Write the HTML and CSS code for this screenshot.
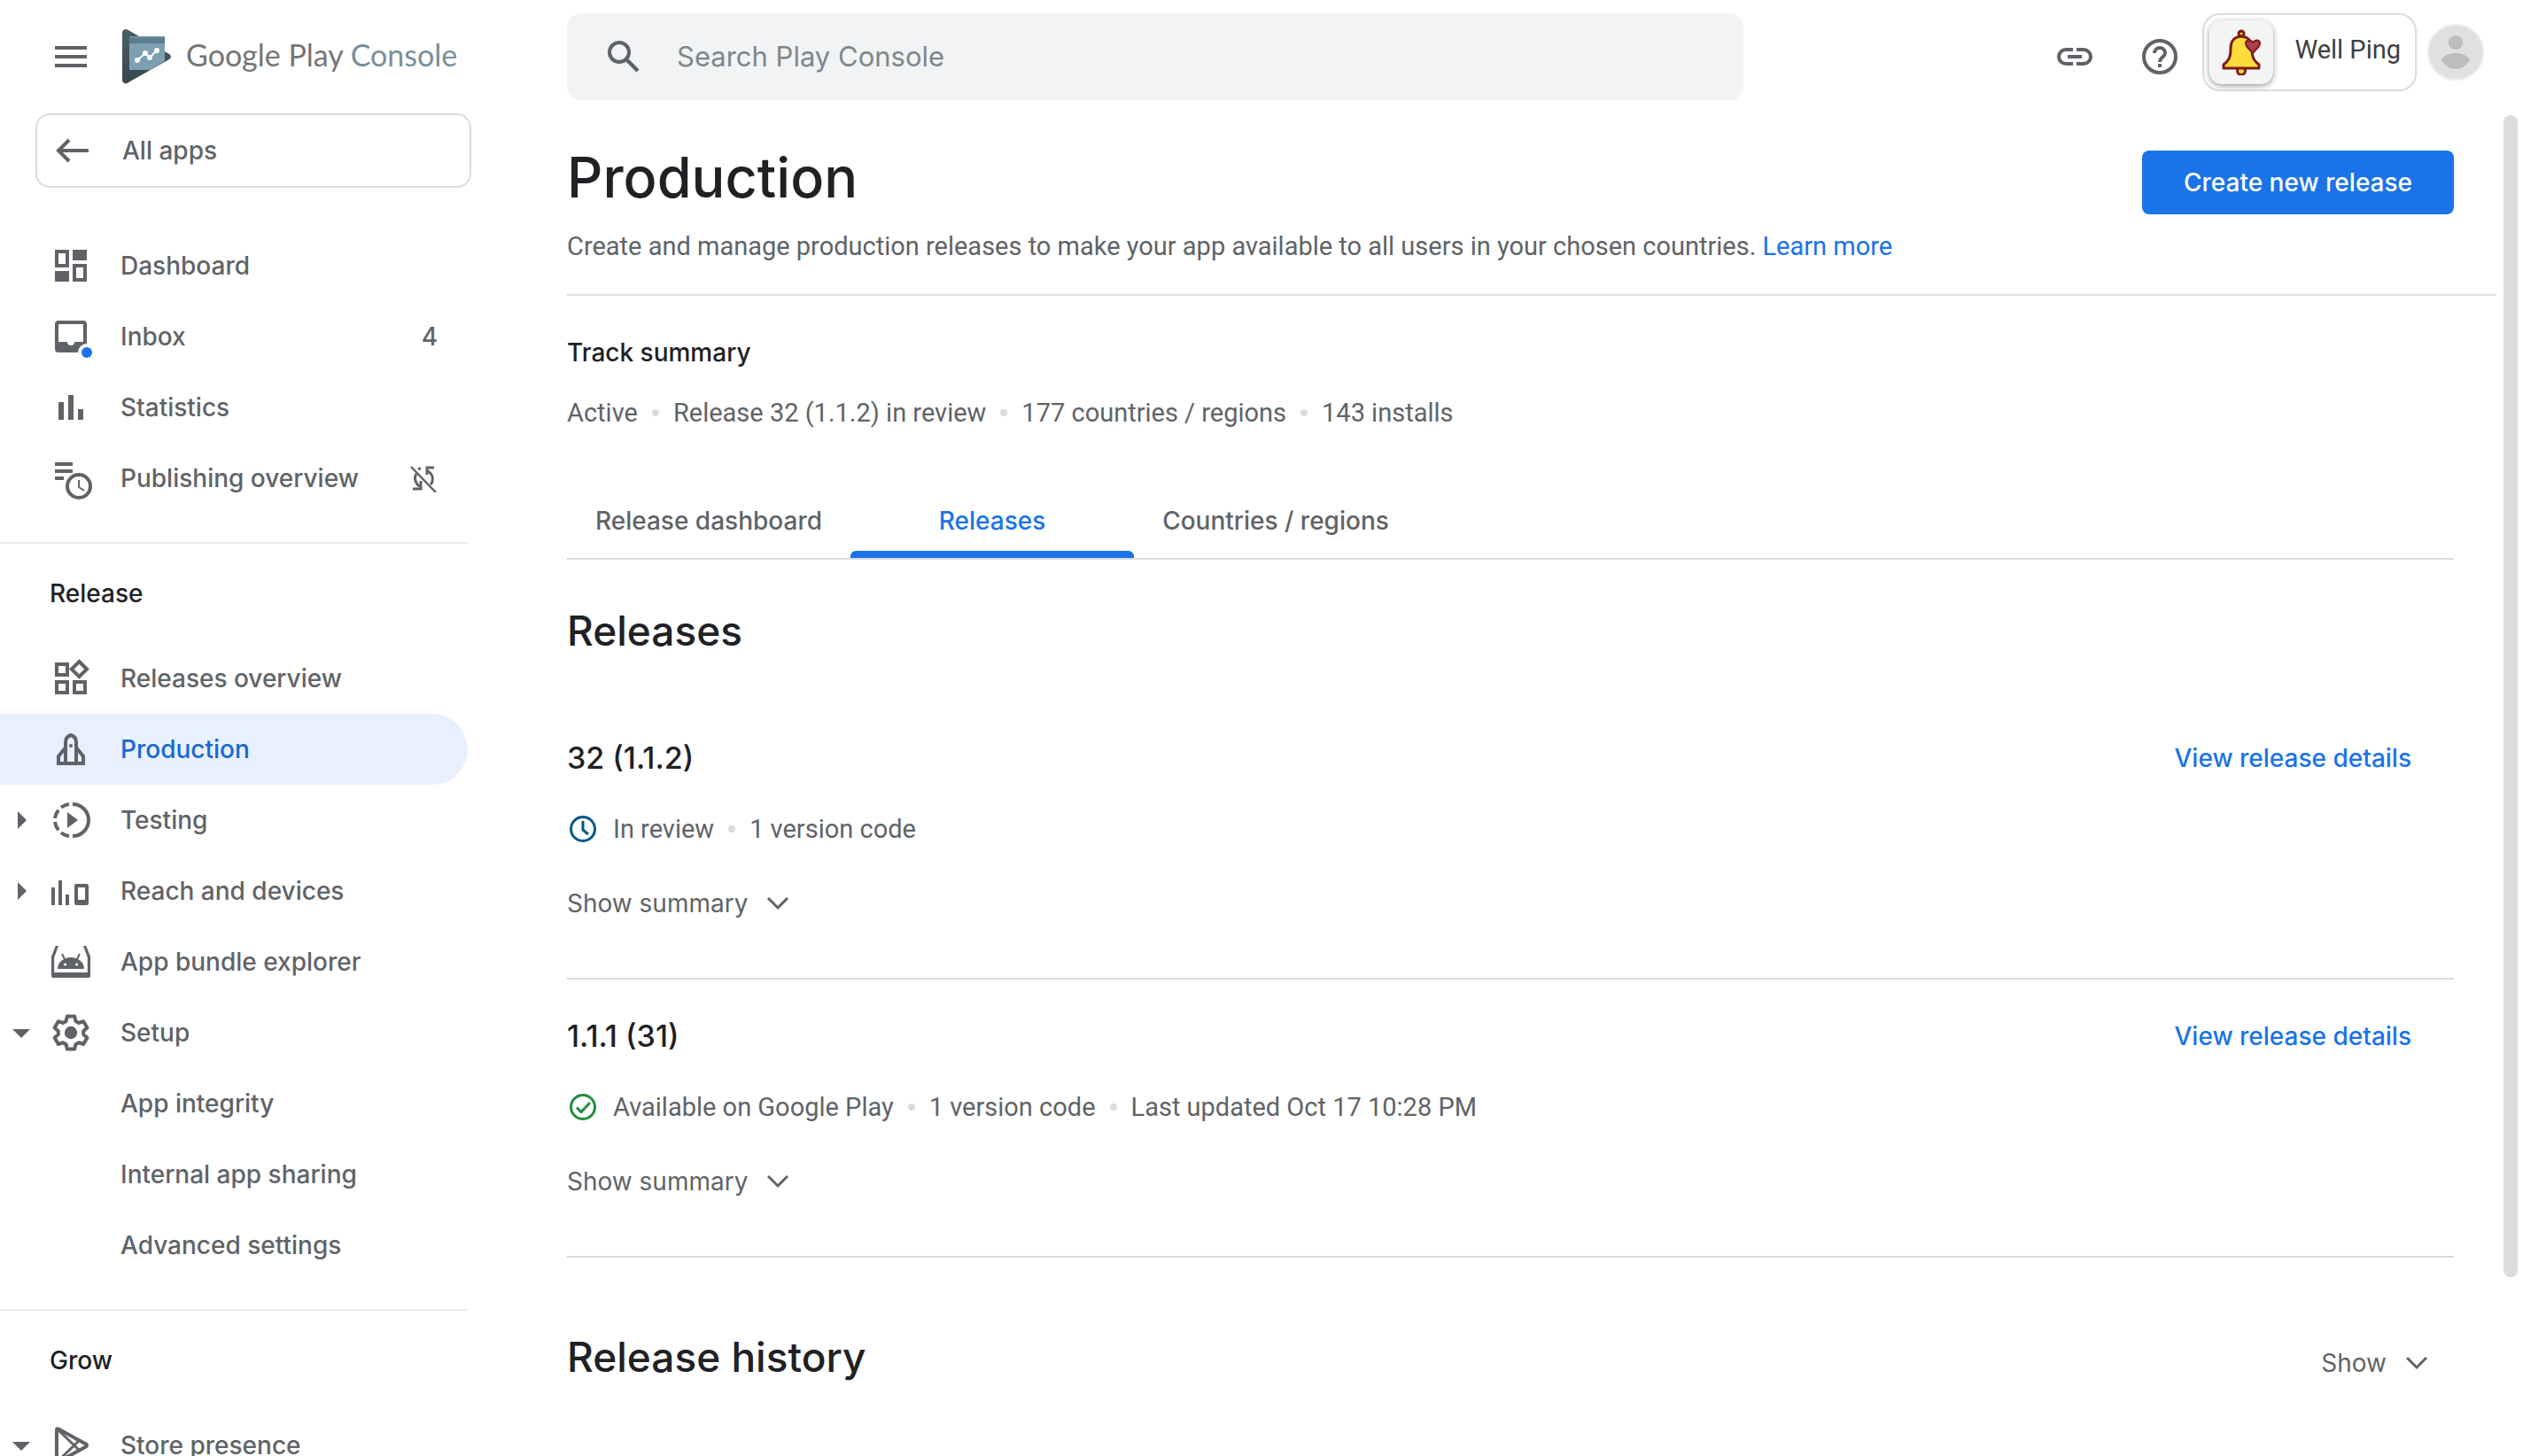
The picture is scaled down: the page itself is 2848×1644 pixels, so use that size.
FILE: index.html
```html
<!DOCTYPE html>
<html lang="en">
<head>
<meta charset="utf-8">
<title>Production | Google Play Console</title>
<meta name="viewport" content="width=device-width, initial-scale=1">
<link rel="stylesheet" href="styles.css">
</head>
<body>
<div class="app">
  <aside class="sidebar">
    <div class="brand">
      <button class="icon-button" type="button" aria-label="Main menu">
        <svg class="icon" viewBox="0 0 24 24"><path d="M3 6h18v2H3zM3 11h18v2H3zM3 16h18v2H3z"/></svg>
      </button>
      <a class="brand-link" href="#">
        <svg class="brand-mark" viewBox="0 0 56 62" aria-hidden="true">
          <defs>
            <linearGradient id="mark" x1="0" y1="0" x2="0" y2="1"><stop offset="0" stop-color="#4a5f66"/><stop offset="1" stop-color="#36464e"/></linearGradient>
            <clipPath id="tri"><path d="M0 0H48V36L28 48H0z"/></clipPath>
          </defs>
          <path fill="url(#mark)" d="M0 4Q0 1 3 0Q5 0 7 1L53 28Q57 31 53 34L7 60Q5 62 3 61Q0 60 0 57z"/>
          <g clip-path="url(#tri)">
            <path fill="#7d9fb2" d="M8 8h40v38H8z"/>
            <path fill="#5b7d8d" d="M8 8h40v8H8z"/>
            <path fill="#6c919f" d="M8 8h40v2H8z"/>
          </g>
          <path fill="none" stroke="#fff" stroke-width="2" d="M17 35L26 27L31 32L39 24"/>
          <g fill="#fff"><circle cx="17" cy="35" r="3"/><circle cx="26" cy="27" r="3"/><circle cx="31" cy="32" r="3"/><circle cx="39" cy="24" r="3"/></g>
        </svg>
        <span class="brand-name">Google Play <span class="brand-product">Console</span></span>
      </a>
    </div>

    <a class="all-apps" href="#">
      <svg class="icon" viewBox="0 0 24 24"><path fill="none" stroke="currentColor" stroke-width="2" d="M21 12H4M10 6l-6 6 6 6"/></svg>
      All apps
    </a>

    <nav class="nav" aria-label="Console">
      <ul class="nav-list">
        <li><a class="nav-item" href="#">
          <svg class="icon" viewBox="0 0 24 24"><path fill-rule="evenodd" d="M3 3h8v10H3zM5 5v6h4V5zM13 3h8v6h-8zM13 11h8v10h-8zM15 13v6h4v-6zM3 15h8v6H3z"/></svg>
          <span class="nav-label">Dashboard</span></a></li>
        <li><a class="nav-item" href="#">
          <svg class="icon" viewBox="0 0 24 24"><path fill-rule="evenodd" d="M5 3h14a2 2 0 0 1 2 2v11a5 5 0 0 0-5 5H5a2 2 0 0 1-2-2V5a2 2 0 0 1 2-2zM5 5v10h5a2 2 0 0 0 4 0h5V5z"/><circle cx="21" cy="21" r="3" fill="#1a73e8"/></svg>
          <span class="nav-label">Inbox</span><span class="nav-count">4</span></a></li>
        <li><a class="nav-item" href="#">
          <svg class="icon" viewBox="0 0 24 24"><path d="M5 9h3v10H5zM10.500 5h3v14h-3zM16 13h3v6h-3z"/></svg>
          <span class="nav-label">Statistics</span></a></li>
        <li><a class="nav-item" href="#">
          <svg class="icon" viewBox="0 0 24 24"><path d="M3 3h10v2H3zM3 7h10v2H3zM3 11h5v2H3z"/><circle cx="16.500" cy="16.500" r="7.500" fill="#fff"/><circle cx="16.500" cy="16.500" r="6.500" fill="none" stroke="currentColor" stroke-width="2"/><path fill="none" stroke="currentColor" d="M16.500 13v4l3 2"/></svg>
          <span class="nav-label">Publishing overview</span>
          <svg class="nav-sync" viewBox="0 0 32 32" aria-label="Managed publishing off"><g fill="none" stroke="currentColor" stroke-width="3"><path d="M21 8Q28 12 26 20Q25 22 24 23M8 11Q4 17 10 24L12 25M13 4.500L10 6"/><path d="M28 4H20V12M4 28H13V19" stroke-width="3"/><path d="M2 3L30 32" stroke-width="2.500"/></g></svg>
        </a></li>
      </ul>

      <section class="nav-section">
        <h2 class="nav-heading">Release</h2>
        <ul class="nav-list">
          <li><a class="nav-item" href="#">
            <svg class="icon" viewBox="0 0 24 24"><g fill="none" stroke="currentColor" stroke-width="2"><path d="M4 4h6v6H4zM4 14h6v6H4zM14 14h6v6h-6zM16.700 2.500L21 6.800L16.700 11L12.400 6.800z"/></g></svg>
            <span class="nav-label">Releases overview</span></a></li>
          <li><a class="nav-item is-current" href="#" aria-current="page">
            <svg class="icon" viewBox="0 0 24 24"><g fill="none" stroke="currentColor" stroke-width="2"><path d="M9 20V8Q9 5 12 4Q15 5 15 8V20M9 11L5 16V20H19V16L15 11"/></g><circle cx="12" cy="10" r="1"/></svg>
            <span class="nav-label">Production</span></a></li>
          <li><a class="nav-item" href="#">
            <svg class="nav-arrow" viewBox="0 0 24 24"><path d="M8 2l10 10L8 22z"/></svg>
            <svg class="icon" viewBox="0 0 24 24"><g fill="none" stroke="currentColor" stroke-width="2"><path d="M13 3a9 9 0 0 1 0 18"/><path d="M11 3a9 9 0 0 0-4.500 1.900M5 6.400A9 9 0 0 0 3 11M3 13a9 9 0 0 0 2 4.600M6.500 19.100A9 9 0 0 0 11 21"/></g><path d="M10 7.500v9l6-4.500z"/></svg>
            <span class="nav-label">Testing</span></a></li>
          <li><a class="nav-item" href="#">
            <svg class="nav-arrow" viewBox="0 0 24 24"><path d="M8 2l10 10L8 22z"/></svg>
            <svg class="icon" viewBox="0 0 24 24"><path fill-rule="evenodd" d="M1 10h2v10H1zM5 6h2v14H5zM9 14h2v6H9zM15 8h6a1 1 0 0 1 1 1v10a1 1 0 0 1-1 1h-6a1 1 0 0 1-1-1V9a1 1 0 0 1 1-1zM16 10v7h4v-7z"/></svg>
            <span class="nav-label">Reach and devices</span></a></li>
          <li><a class="nav-item" href="#">
            <svg class="icon" viewBox="0 0 24 24"><path fill-rule="evenodd" d="M3.400 3H5L2.600 9.500V18H21.400V9.500L19 3H20.600L23 9V20a1 1 0 0 1-1 1H2a1 1 0 0 1-1-1V9z"/><path fill-rule="evenodd" d="M4.500 16a7.500 6.500 0 0 1 15 0zM8 13.500a.8.800 0 1 0 1.600 0 .8.800 0 1 0-1.600 0M14.500 13.500a.8.800 0 1 0 1.600 0 .8.800 0 1 0-1.600 0"/><path fill="none" stroke="currentColor" d="M7 7.500l1.500 3M17 7.500l-1.500 3"/></svg>
            <span class="nav-label">App bundle explorer</span></a></li>
          <li><a class="nav-item" href="#">
            <svg class="nav-arrow" viewBox="0 0 24 24"><path d="M2 8h20L12 18z"/></svg>
            <svg class="icon" viewBox="0 0 24 24"><path fill="none" stroke="currentColor" stroke-width="2" stroke-linejoin="round" d="M9.900 2.700h4.200l.6 2.800 1.700 1 2.700-.9 2.100 3.600-2.100 1.900v1.900l2.100 1.900-2.100 3.600-2.700-.9-1.700 1-.6 2.700H9.900l-.6-2.700-1.700-1-2.700.9-2.100-3.600L4.900 13v-1.900L2.800 9.200l2.100-3.600 2.700.9 1.700-1z"/><circle cx="12" cy="12" r="3.600"/></svg>
            <span class="nav-label">Setup</span></a>
            <ul class="nav-list">
              <li><a class="nav-item nav-child" href="#">App integrity</a></li>
              <li><a class="nav-item nav-child" href="#">Internal app sharing</a></li>
              <li><a class="nav-item nav-child" href="#">Advanced settings</a></li>
            </ul>
          </li>
        </ul>
      </section>

      <section class="nav-section">
        <h2 class="nav-heading">Grow</h2>
        <ul class="nav-list">
          <li><a class="nav-item" href="#">
            <svg class="nav-arrow" viewBox="0 0 24 24"><path d="M2 8h20L12 18z"/></svg>
            <svg class="icon" viewBox="0 0 24 24"><g fill="none" stroke="currentColor" stroke-width="2" stroke-linejoin="round"><path d="M4 3.200Q4 2.400 5 2.800L20.500 11.200Q21.500 12 20.500 12.800L5 21.200Q4 21.600 4 20.800z"/><path stroke-width="1.500" d="M4.500 3L17 15M4.500 21L17 9"/></g></svg>
            <span class="nav-label">Store presence</span></a></li>
        </ul>
      </section>
    </nav>
  </aside>

  <div class="page">
    <header class="topbar">
      <label class="search">
        <svg class="icon" viewBox="0 0 24 24"><circle cx="9.500" cy="9.500" r="5.500" fill="none" stroke="currentColor" stroke-width="2"/><path fill="none" stroke="currentColor" stroke-width="2.200" d="M13.500 13.500l6.500 6.500"/></svg>
        <input class="search-input" type="search" placeholder="Search Play Console" aria-label="Search Play Console">
      </label>
      <div class="tools">
        <button class="icon-button" type="button" aria-label="Copy link">
          <svg class="icon" viewBox="0 0 24 24"><g fill="none" stroke="currentColor" stroke-width="2"><path d="M11 8H7a4 4 0 0 0 0 8h4M13 8h4a4 4 0 0 1 0 8h-4M8 12h8"/></g></svg>
        </button>
        <button class="icon-button" type="button" aria-label="Help">
          <svg class="icon" viewBox="0 0 24 24"><g fill="none" stroke="currentColor" stroke-width="2"><circle cx="12" cy="12" r="9"/><path d="M9 10a3 3 0 0 1 6 0c0 2-3 2.300-3 5"/></g><path d="M11 16h2v2h-2z"/></svg>
        </button>
      </div>
      <button class="app-chip" type="button">
        <span class="app-tile">
          <svg class="bell" viewBox="0 0 44 52" aria-hidden="true">
            <g stroke="#7d1a17" stroke-width="3" stroke-linejoin="round">
              <circle cx="22" cy="5" r="3" fill="#ffdc3c"/>
              <circle cx="22" cy="47" r="4.500" fill="#ffdc3c"/>
              <path fill="#ffdc3c" d="M22 8C12 9 10 15 10 22C10 33 7 36 2 40V44H42V40C37 36 34 33 34 22C34 15 32 9 22 8z"/>
              <path fill="#a9404c" stroke-width="2" d="M35 27C31 22 27 20 27 16C27 12 32 11 35 15C38 11 43 12 43 16C43 20 39 22 35 27z"/>
            </g>
          </svg>
        </span>
        <span class="app-name">Well Ping</span>
      </button>
      <button class="avatar" type="button" aria-label="Account">
        <svg viewBox="0 0 64 64"><circle cx="32" cy="32" r="31" fill="#e0e0e0" stroke="#ececec" stroke-width="2"/><circle cx="32" cy="21" r="8" fill="#bdbdbd"/><path fill="#bdbdbd" d="M16 41Q20 33 32 33Q44 33 48 41Q42 51 32 51Q22 51 16 41z"/></svg>
      </button>
    </header>

    <main class="content">
      <div class="intro">
        <div class="intro-text">
          <h1 class="title">Production</h1>
          <p class="lead">Create and manage production releases to make your app available to all users in your chosen countries. <a class="link" href="#">Learn more</a></p>
        </div>
        <button class="primary" type="button">Create new release</button>
      </div>

      <div class="sections">
        <section class="summary">
          <h2 class="summary-title">Track summary</h2>
          <ul class="facts">
            <li>Active</li>
            <li>Release 32 (1.1.2) in review</li>
            <li>177 countries / regions</li>
            <li>143 installs</li>
          </ul>
        </section>

        <div class="tabs" role="tablist">
          <button class="tab" role="tab" type="button">Release dashboard</button>
          <button class="tab is-active" role="tab" type="button" aria-selected="true">Releases</button>
          <button class="tab" role="tab" type="button">Countries / regions</button>
        </div>

        <h2 class="heading">Releases</h2>

        <article class="release">
          <div class="release-head">
            <h3 class="release-name">32 (1.1.2)</h3>
            <a class="link details" href="#">View release details</a>
          </div>
          <div class="status">
            <svg class="status-icon is-review" viewBox="0 0 36 36"><g fill="none" stroke="currentColor" stroke-width="3"><circle cx="18" cy="18" r="13.500"/><path d="M18 9v10l6 5"/></g></svg>
            <ul class="facts">
              <li>In review</li>
              <li>1 version code</li>
            </ul>
          </div>
          <button class="toggle" type="button">Show summary
            <svg class="chevron" viewBox="0 0 24 24"><path fill="none" stroke="currentColor" stroke-width="3" d="M1 6l11 11L23 6"/></svg>
          </button>
        </article>

        <article class="release">
          <div class="release-head">
            <h3 class="release-name">1.1.1 (31)</h3>
            <a class="link details" href="#">View release details</a>
          </div>
          <div class="status">
            <svg class="status-icon is-live" viewBox="0 0 36 36"><g fill="none" stroke="currentColor" stroke-width="3"><circle cx="18" cy="18" r="13.500"/><path d="M11 18.500l5 5 10-10.500"/></g></svg>
            <ul class="facts">
              <li>Available on Google Play</li>
              <li>1 version code</li>
              <li>Last updated Oct 17 10:28 PM</li>
            </ul>
          </div>
          <button class="toggle" type="button">Show summary
            <svg class="chevron" viewBox="0 0 24 24"><path fill="none" stroke="currentColor" stroke-width="3" d="M1 6l11 11L23 6"/></svg>
          </button>
        </article>

        <div class="history">
          <h2 class="heading">Release history</h2>
          <button class="toggle" type="button">Show
            <svg class="chevron" viewBox="0 0 24 24"><path fill="none" stroke="currentColor" stroke-width="3" d="M1 6l11 11L23 6"/></svg>
          </button>
        </div>
      </div>
    </main>
    <div class="scrollbar" aria-hidden="true"></div>
  </div>
</div>
</body>
</html>
```

FILE: styles.css
```css
:root {
  --display: Inter, "Liberation Sans", sans-serif;
  --text: Roboto, "Liberation Sans", sans-serif;
  --ink: #202124;
  --muted: #5f6368;
  --line: #dadce0;
  --blue: #1a73e8;
}

*,
*::before,
*::after {
  box-sizing: border-box;
}

body {
  margin: 0;
  background: #fff;
  color: var(--muted);
  font: 400 29px/40px var(--text);
}

h1, h2, h3, p, ul {
  margin: 0;
  padding: 0;
}

ul {
  list-style: none;
}

a {
  color: inherit;
  text-decoration: none;
}

button {
  margin: 0;
  padding: 0;
  border: 0;
  background: none;
  color: inherit;
  cursor: pointer;
}

svg {
  display: block;
  flex: none;
  fill: currentColor;
}

.app {
  display: flex;
  height: 100vh;
  overflow: hidden;
}

.icon {
  width: 48px;
  height: 48px;
}

.icon-button {
  display: block;
}

/* Sidebar */
.sidebar {
  flex: none;
  width: 568px;
  font: 500 28px/40px var(--display);
}

.brand {
  display: flex;
  align-items: center;
  gap: 34px;
  height: 128px;
  padding-left: 56px;
}

.brand-link {
  display: flex;
  align-items: center;
  gap: 16px;
}

.brand-mark {
  width: 56px;
  height: 62px;
}

.brand-name {
  padding-bottom: 4px;
  color: #757575;
  font: 400 34px/40px Lato, var(--display);
  white-space: nowrap;
}

.brand-product {
  color: #78909c;
}

.all-apps {
  display: flex;
  align-items: center;
  gap: 32px;
  height: 84px;
  margin: 0 36px 48px 40px;
  padding-left: 16px;
  border: 2px solid var(--line);
  border-radius: 16px;
}

.nav {
  width: 528px;
}

.nav-item {
  position: relative;
  display: flex;
  align-items: center;
  gap: 32px;
  height: 80px;
  padding: 0 34px 0 56px;
  border-radius: 0 40px 40px 0;
}

.nav-label {
  flex: 1;
}

.nav-child {
  padding-left: 136px;
}

.nav-item.is-current {
  background: #e8f0fe;
}

.is-current .nav-label {
  color: #1967d2;
}

.nav-sync {
  width: 32px;
  height: 32px;
}

.nav-arrow {
  position: absolute;
  left: 12px;
  width: 24px;
  height: 24px;
}

.nav-section {
  margin-top: 32px;
  border-top: 2px solid #e8eaed;
}

.nav-heading {
  padding: 36px 56px;
  color: var(--ink);
  font: inherit;
}

/* Page */
.page {
  position: relative;
  flex: 1;
  min-width: 0;
  padding: 0 30px 0 72px;
}

.topbar {
  display: flex;
  align-items: center;
  height: 128px;
  padding-right: 14px;
}

.search {
  display: flex;
  flex: 0 1 1328px;
  align-items: center;
  gap: 36px;
  height: 98px;
  padding: 0 40px;
  border-radius: 16px;
  background: #f1f3f4;
}

.search-input {
  flex: 1;
  min-width: 0;
  padding: 0;
  border: 0;
  outline: 0;
  background: none;
  color: var(--ink);
  font: 400 31px/40px var(--display);
}

.search-input::placeholder {
  color: #80868b;
  opacity: 1;
}

.tools {
  display: flex;
  gap: 48px;
  margin: 0 24px 0 auto;
}

.app-chip {
  display: flex;
  align-items: center;
  gap: 24px;
  height: 88px;
  margin: 0 12px 10px 0;
  padding: 0 16px 0 6px;
  border: 2px solid var(--line);
  border-radius: 20px;
  color: #3c4043;
  font: 400 29px/40px var(--text);
  white-space: nowrap;
}

.app-name {
  padding-bottom: 6px;
}

.app-tile {
  display: grid;
  place-items: center;
  width: 72px;
  height: 72px;
  border-radius: 14px;
  background: #f4f4f4;
  box-shadow: 0 2px 6px rgb(0 0 0 / 40%);
}

.bell {
  width: 44px;
  height: 52px;
}

.avatar {
  width: 64px;
  height: 64px;
  margin-bottom: 10px;
}

.intro {
  display: flex;
  align-items: flex-start;
  justify-content: space-between;
  padding: 32px 48px 34px 0;
  border-bottom: 2px solid var(--line);
}

.title {
  margin-bottom: 18px;
  color: var(--ink);
  font: 500 63px/80px var(--display);
}

.link {
  color: var(--blue);
}

.primary {
  flex: none;
  width: 352px;
  height: 72px;
  margin-top: 10px;
  border-radius: 8px;
  background: var(--blue);
  color: #fff;
  font: 500 28px/40px var(--display);
}

.sections {
  padding-right: 48px;
}

.summary {
  padding: 44px 0 60px;
}

.summary-title {
  margin-bottom: 28px;
  color: var(--ink);
  font: 500 28px/40px var(--display);
}

.facts {
  display: flex;
}

.facts li {
  display: flex;
  align-items: center;
}

.facts li + li::before {
  width: 8px;
  height: 8px;
  margin: 0 16px;
  border-radius: 50%;
  background: var(--line);
  content: "";
}

.tabs {
  display: flex;
  border-bottom: 2px solid var(--line);
}

.tab {
  position: relative;
  width: 320px;
  height: 84px;
  font: 500 28px/40px var(--display);
}

.tab.is-active {
  color: var(--blue);
}

.tab.is-active::after {
  position: absolute;
  right: 0;
  bottom: 0;
  left: 0;
  height: 8px;
  border-radius: 6px 6px 0 0;
  background: var(--blue);
  content: "";
}

.heading {
  color: var(--ink);
  font: 500 46px/64px var(--display);
}

.tabs + .heading {
  margin: 48px 0 84px;
}

.release {
  margin-bottom: 36px;
  padding-bottom: 64px;
  border-bottom: 2px solid var(--line);
}

.release-head {
  display: flex;
  align-items: center;
  justify-content: space-between;
  height: 56px;
  padding-right: 48px;
}

.release-name {
  color: var(--ink);
  font: 500 34px/48px var(--display);
}

.details {
  font: 500 28px/40px var(--display);
}

.status {
  display: flex;
  align-items: center;
  gap: 16px;
  margin: 32px 0 44px;
}

.status-icon {
  width: 36px;
  height: 36px;
}

.is-review {
  color: #00578a;
}

.is-live {
  color: #1e8e3e;
}

.toggle {
  display: flex;
  align-items: center;
  gap: 22px;
  font: 400 28px/40px var(--display);
}

.chevron {
  width: 24px;
  height: 24px;
}

.history {
  display: flex;
  align-items: baseline;
  justify-content: space-between;
  padding: 44px 30px 44px 0;
}

.scrollbar {
  position: absolute;
  top: 130px;
  right: 6px;
  bottom: 202px;
  width: 16px;
  border-radius: 8px;
  background: var(--line);
}
```
